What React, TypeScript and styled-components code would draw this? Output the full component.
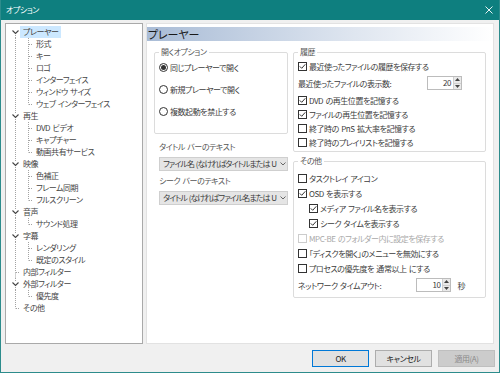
import React from 'react';
import styled, { createGlobalStyle } from 'styled-components';

const GlobalStyle = createGlobalStyle`
  html, body {
    margin: 0;
    padding: 0;
    background: #f0f0f0;
  }
  body {
    font-family: "Noto Sans CJK JP", "Noto Sans", sans-serif;
    font-size: 8px;
    font-feature-settings: "palt";
    letter-spacing: -0.45px;
    word-spacing: 1px;
    color: #3c3c3c;
  }
  * {
    box-sizing: border-box;
  }
`;

const Window = styled.div`
  width: 500px;
  height: 373px;
  display: flex;
  flex-direction: column;
  background: #f0f0f0;
  border: 1px solid #2d8c8c;
  border-top: none;
  overflow: hidden;
`;

const TitleBar = styled.div`
  height: 20px;
  flex-shrink: 0;
  display: flex;
  align-items: center;
  background: #0e7f7f;
  color: #fff;
  padding-left: 5px;
`;

const TitleText = styled.span`
  flex: 1;
  line-height: 20px;
`;

const CloseButton = styled.div`
  width: 20px;
  height: 20px;
  display: flex;
  align-items: center;
  justify-content: center;
`;

const Main = styled.div`
  height: 324px;
  display: flex;
  gap: 3px;
  padding: 3px 5px 0 4px;
`;

const TreeBox = styled.div`
  width: 138px;
  height: 321px;
  background: #fff;
  border: 1px solid #a9a9a9;
  padding-top: 2px;
`;

const TreeRowLine = styled.div`
  display: flex;
  align-items: center;
  height: 12px;
`;

const TreeLabel = styled.span<{ $selected?: boolean }>`
  margin-left: 1px;
  padding: 0 3px;
  line-height: 12px;
  white-space: nowrap;
  color: #444;
  background: ${p => (p.$selected ? '#cce8ff' : 'transparent')};
`;

const Panel = styled.div`
  flex: 1;
  height: 321px;
  background: #fff;
  border: 1px solid #e2e2e2;
  padding-top: 3px;
`;

const PanelHeader = styled.div`
  height: 14px;
  line-height: 14px;
  padding-left: 1px;
  font-size: 11px;
  letter-spacing: -0.1px;
  color: #1a1a1a;
  background: linear-gradient(to right, #a9bcd6, #dfe6f0 60%, #ffffff);
`;

const Columns = styled.div`
  display: grid;
  grid-template-columns: 134px 1fr;
  gap: 5px;
  padding: 5px 7px 0 7px;
`;

const Column = styled.div`
  display: flex;
  flex-direction: column;
  gap: 3px;
  min-width: 0;
`;

const Group = styled.fieldset<{ $pt: number; $pb: number; $gap?: number }>`
  margin: 0;
  min-width: 0;
  border: 1px solid #dcdcdc;
  border-radius: 2px;
  padding: ${p => p.$pt}px 4px ${p => p.$pb}px 4px;
  display: flex;
  flex-direction: column;
  gap: ${p => p.$gap ?? 0}px;
`;

const Legend = styled.legend`
  padding: 0 2px;
  line-height: 12px;
  color: #555;
`;

const OptionRow = styled.div<{ $h: number; $indent?: number; $disabled?: boolean }>`
  display: flex;
  align-items: center;
  height: ${p => p.$h}px;
  padding-left: ${p => p.$indent ?? 0}px;
  white-space: pre;
  color: ${p => (p.$disabled ? '#a9a9a9' : '#3c3c3c')};
`;

const Radio = styled.span<{ $on?: boolean }>`
  width: 9px;
  height: 9px;
  border-radius: 50%;
  border: 1px solid #333;
  background: #fff;
  margin-right: 2px;
  flex-shrink: 0;
  display: flex;
  align-items: center;
  justify-content: center;
  &::after {
    content: '';
    width: 5px;
    height: 5px;
    border-radius: 50%;
    background: ${p => (p.$on ? '#333' : 'transparent')};
  }
`;

const Box = styled.span<{ $disabled?: boolean }>`
  width: 9px;
  height: 9px;
  border: 1px solid ${p => (p.$disabled ? '#cccccc' : '#333')};
  background: #fff;
  margin-right: 2px;
  flex-shrink: 0;
  display: flex;
  align-items: center;
  justify-content: center;
`;

const FieldLabel = styled.div`
  margin: 4px 0 0 5px;
  line-height: 12px;
  color: #555;
  white-space: nowrap;
`;

const Combo = styled.div`
  display: flex;
  align-items: center;
  height: 14px;
  margin: 4px 0 0 5px;
  padding-left: 3px;
  background: #e5e5e5;
  border: 1px solid #cfcfcf;
`;

const ComboText = styled.span`
  flex: 1;
  min-width: 0;
  overflow: hidden;
  white-space: nowrap;
  line-height: 12px;
  letter-spacing: -0.95px;
  color: #3c3c3c;
`;

const ComboArrow = styled.span`
  width: 9px;
  flex-shrink: 0;
  display: flex;
  align-items: center;
  justify-content: center;
`;

const SpinLabel = styled.span`
  flex: 1;
`;

const SpinBox = styled.div<{ $mr?: number }>`
  display: flex;
  width: 35px;
  height: 14px;
  border: 1px solid #bcbcbc;
  background: #fff;
  margin-right: ${p => p.$mr ?? 0}px;
`;

const SpinValue = styled.span`
  flex: 1;
  text-align: right;
  padding-right: 2px;
  line-height: 12px;
`;

const SpinButtons = styled.div`
  width: 8px;
  display: flex;
  flex-direction: column;
  border-left: 1px solid #cfcfcf;
`;

const SpinArrow = styled.div`
  flex: 1;
  background: #e9e9e9;
  display: flex;
  align-items: center;
  justify-content: center;
  & + & {
    border-top: 1px solid #cfcfcf;
  }
`;

const Unit = styled.span`
  margin: 0 16px 0 6px;
`;

const Footer = styled.div`
  height: 28px;
  display: flex;
  justify-content: flex-end;
  gap: 6px;
  padding: 6px 4px 5px 0;
`;

const Button = styled.div<{ $primary?: boolean; $disabled?: boolean }>`
  width: 57px;
  height: 17px;
  display: flex;
  align-items: center;
  justify-content: center;
  background: ${p => (p.$disabled ? '#cccccc' : '#e1e1e1')};
  border: 1px solid ${p => (p.$primary ? '#0078d7' : p.$disabled ? '#bfbfbf' : '#adadad')};
  color: ${p => (p.$disabled ? '#8a8a8a' : '#222')};
`;

type Row = {
  label: string;
  level: 0 | 1;
  expander?: boolean;
  first?: boolean;
  last?: boolean;
  selected?: boolean;
};

const treeRows: Row[] = [
  { label: 'プレーヤー', level: 0, expander: true, first: true, selected: true },
  { label: '形式', level: 1 },
  { label: 'キー', level: 1 },
  { label: 'ロゴ', level: 1 },
  { label: 'インターフェイス', level: 1 },
  { label: 'ウィンドウ サイズ', level: 1 },
  { label: 'ウェブ インターフェイス', level: 1, last: true },
  { label: '再生', level: 0, expander: true },
  { label: 'DVD ビデオ', level: 1 },
  { label: 'キャプチャー', level: 1 },
  { label: '動画共有サービス', level: 1, last: true },
  { label: '映像', level: 0, expander: true },
  { label: '色補正', level: 1 },
  { label: 'フレーム同期', level: 1 },
  { label: 'フルスクリーン', level: 1, last: true },
  { label: '音声', level: 0, expander: true },
  { label: 'サウンド処理', level: 1, last: true },
  { label: '字幕', level: 0, expander: true },
  { label: 'レンダリング', level: 1 },
  { label: '既定のスタイル', level: 1, last: true },
  { label: '内部フィルター', level: 0 },
  { label: '外部フィルター', level: 0, expander: true },
  { label: '優先度', level: 1, last: true },
  { label: 'その他', level: 0, last: true },
];

const dots = { stroke: '#a3a3a3', strokeWidth: 1, strokeDasharray: '1 1' };

function RootGuide({ row }: { row: Row }) {
  return (
    <svg width="13" height="12" viewBox="0 0 13 12">
      {row.expander ? (
        <>
          {!row.first && <line x1="9.5" y1="0" x2="9.5" y2="3" {...dots} />}
          {!row.last && <line x1="9.5" y1="9" x2="9.5" y2="12" {...dots} />}
          <path d="M6.5 4.5 L9.5 7.5 L12.5 4.5" fill="none" stroke="#444" strokeWidth="1.1" />
        </>
      ) : (
        <>
          {!row.first && <line x1="9.5" y1="0" x2="9.5" y2="6.5" {...dots} />}
          {!row.last && <line x1="9.5" y1="6.5" x2="9.5" y2="12" {...dots} />}
          <line x1="10" y1="6.5" x2="13" y2="6.5" {...dots} />
        </>
      )}
    </svg>
  );
}

function ChildGuide({ last }: { last?: boolean }) {
  return (
    <>
      <svg width="13" height="12" viewBox="0 0 13 12">
        <line x1="9.5" y1="0" x2="9.5" y2="12" {...dots} />
      </svg>
      <svg width="13" height="12" viewBox="0 0 13 12">
        <line x1="9.5" y1="0" x2="9.5" y2={last ? 6.5 : 12} {...dots} />
        <line x1="10" y1="6.5" x2="13" y2="6.5" {...dots} />
      </svg>
    </>
  );
}

function Check() {
  return (
    <svg width="7" height="7" viewBox="0 0 7 7">
      <path d="M0.8 3.4 L2.7 5.3 L6.3 1.3" fill="none" stroke="#333" strokeWidth="1" />
    </svg>
  );
}

function Spin({ value, mr }: { value: string; mr?: number }) {
  return (
    <SpinBox $mr={mr}>
      <SpinValue>{value}</SpinValue>
      <SpinButtons>
        <SpinArrow>
          <svg width="5" height="3" viewBox="0 0 5 3">
            <path d="M0 3 L2.5 0 L5 3 Z" fill="#444" />
          </svg>
        </SpinArrow>
        <SpinArrow>
          <svg width="5" height="3" viewBox="0 0 5 3">
            <path d="M0 0 L2.5 3 L5 0 Z" fill="#444" />
          </svg>
        </SpinArrow>
      </SpinButtons>
    </SpinBox>
  );
}

function CheckRow({ label, on, h, indent, disabled }: { label: string; on?: boolean; h: number; indent?: number; disabled?: boolean }) {
  return (
    <OptionRow $h={h} $indent={indent} $disabled={disabled}>
      <Box $disabled={disabled}>{on && <Check />}</Box>
      {label}
    </OptionRow>
  );
}

function ComboBox({ text }: { text: string }) {
  return (
    <Combo>
      <ComboText>{text}</ComboText>
      <ComboArrow>
        <svg width="6" height="4" viewBox="0 0 6 4">
          <path d="M0.5 0.5 L3 3 L5.5 0.5" fill="none" stroke="#666" strokeWidth="1" />
        </svg>
      </ComboArrow>
    </Combo>
  );
}

export default function App() {
  return (
    <>
      <GlobalStyle />
      <Window>
        <TitleBar>
          <TitleText>オプション</TitleText>
          <CloseButton>
            <svg width="8" height="8" viewBox="0 0 8 8">
              <path d="M0.5 0.5 L7.5 7.5 M7.5 0.5 L0.5 7.5" stroke="#e6f2f2" strokeWidth="1" />
            </svg>
          </CloseButton>
        </TitleBar>

        <Main>
          <TreeBox>
            {treeRows.map(row => (
              <TreeRowLine key={row.label}>
                {row.level === 0 ? <RootGuide row={row} /> : <ChildGuide last={row.last} />}
                <TreeLabel $selected={row.selected}>{row.label}</TreeLabel>
              </TreeRowLine>
            ))}
          </TreeBox>

          <Panel>
            <PanelHeader>プレーヤー</PanelHeader>
            <Columns>
              <Column>
                <Group $pt={2} $pb={15} $gap={8}>
                  <Legend>開くオプション</Legend>
                  <OptionRow $h={14}>
                    <Radio $on />
                    同じプレーヤーで開く
                  </OptionRow>
                  <OptionRow $h={14}>
                    <Radio />
                    新規プレーヤーで開く
                  </OptionRow>
                  <OptionRow $h={14}>
                    <Radio />
                    複数起動を禁止する
                  </OptionRow>
                </Group>
                <div>
                  <FieldLabel>タイトル バーのテキスト</FieldLabel>
                  <ComboBox text="ファイル名 (なければタイトルまたは U" />
                  <FieldLabel>シーク バーのテキスト</FieldLabel>
                  <ComboBox text="タイトル (なければファイル名または U" />
                </div>
              </Column>

              <Column>
                <Group $pt={1} $pb={2}>
                  <Legend>履歴</Legend>
                  <CheckRow h={14} on label="最近使ったファイルの履歴を保存する" />
                  <OptionRow $h={20}>
                    <SpinLabel>最近使ったファイルの表示数:</SpinLabel>
                    <Spin value="20" mr={19} />
                  </OptionRow>
                  <CheckRow h={14} on label="DVD の再生位置を記憶する" />
                  <CheckRow h={14} on label="ファイルの再生位置を記憶する" />
                  <CheckRow h={14} label="終了時の PnS 拡大率を記憶する" />
                  <CheckRow h={14} label="終了時のプレイリストを記憶する" />
                </Group>

                <Group $pt={4} $pb={3}>
                  <Legend>その他</Legend>
                  <CheckRow h={15} label="タスクトレイ アイコン" />
                  <CheckRow h={15} on label="OSD を表示する" />
                  <CheckRow h={15} on indent={11} label="メディア ファイル名を表示する" />
                  <CheckRow h={15} on indent={11} label="シーク タイムを表示する" />
                  <CheckRow h={15} disabled label="MPC-BE のフォルダー内に設定を保存する" />
                  <CheckRow h={15} label="「ディスクを開く」のメニューを無効にする" />
                  <CheckRow h={15} label="プロセスの優先度を 通常以上 にする" />
                  <OptionRow $h={18}>
                    <SpinLabel>ネットワーク タイムアウト:</SpinLabel>
                    <Spin value="10" />
                    <Unit>秒</Unit>
                  </OptionRow>
                </Group>
              </Column>
            </Columns>
          </Panel>
        </Main>

        <Footer>
          <Button $primary>OK</Button>
          <Button>キャンセル</Button>
          <Button $disabled>適用(A)</Button>
        </Footer>
      </Window>
    </>
  );
}
